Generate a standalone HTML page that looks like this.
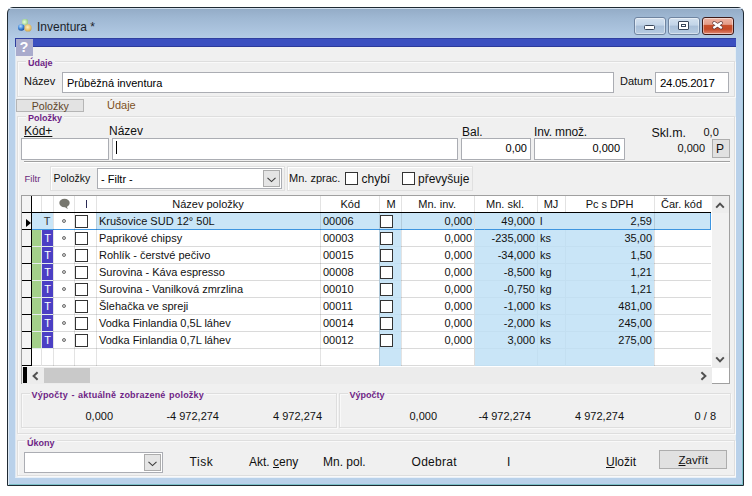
<!DOCTYPE html><html><head><meta charset="utf-8"><style>
html,body{margin:0;padding:0;width:752px;height:496px;overflow:hidden;background:#fff;}
body{position:relative;font-family:"Liberation Sans",sans-serif;}
.a{position:absolute;box-sizing:border-box;}
.t{position:absolute;white-space:nowrap;}
</style></head><body>
<div class="a" style="left:7px;top:7px;width:737px;height:479px;border:1px solid #1f2a33;border-radius:6px 6px 0 0;background:linear-gradient(#93abc6 0px,#9fb8d3 10px,#b3cbe5 30px,#b9d1ea 40px,#b9d1ea 100%);"></div>
<div class="a" style="left:8px;top:8px;width:735px;height:1px;background:#d2dfee;border-radius:5px 5px 0 0;"></div>
<div class="a" style="left:8px;top:60px;width:7px;height:418px;background:#b9d1ea;"></div>
<div class="a" style="left:736px;top:60px;width:7px;height:418px;background:#b9d1ea;"></div>
<div class="a" style="left:8px;top:478px;width:735px;height:7px;background:#b9d1ea;"></div>
<div class="a" style="left:742px;top:40px;width:1px;height:445px;background:linear-gradient(#b9d1ea,#86c6d0 40%,#7cc0c8);"></div>
<div class="a" style="left:8px;top:484px;width:735px;height:1px;background:#7cc0c8;"></div>
<div class="a" style="left:8px;top:40px;width:1px;height:445px;background:#dfeaf5;"></div>
<svg class="a" style="left:14px;top:15px;width:22px;height:20px" viewBox="0 0 22 20">
<defs><radialGradient id="gb" cx="0.4" cy="0.3" r="0.7"><stop offset="0" stop-color="#b8dcff"/><stop offset="0.6" stop-color="#3f86d8"/><stop offset="1" stop-color="#1d4f9a"/></radialGradient>
<radialGradient id="gy" cx="0.45" cy="0.4" r="0.7"><stop offset="0" stop-color="#fff0c0"/><stop offset="0.6" stop-color="#e6c06a"/><stop offset="1" stop-color="#c09a40"/></radialGradient>
<radialGradient id="gg" cx="0.4" cy="0.5" r="0.7"><stop offset="0" stop-color="#e8ffe0"/><stop offset="1" stop-color="#8cc47a"/></radialGradient></defs>
<rect x="8" y="4" width="6" height="6" rx="2" fill="url(#gg)"/>
<circle cx="7.3" cy="12.5" r="3.3" fill="url(#gb)"/><circle cx="14" cy="12.9" r="3.6" fill="url(#gy)"/></svg>
<div class="t" style="left:37px;top:20.84px;font-size:12px;line-height:12px;color:#1b1f2a;">Inventura *</div>
<div class="a" style="left:634px;top:17px;width:32px;height:18px;border:1px solid #6f84a0;border-radius:3px;background:linear-gradient(#d4e1ef 0,#c2d4e8 45%,#a9bfd8 50%,#b8cce2 100%);box-shadow:inset 0 0 0 1px rgba(255,255,255,0.45);"><div class="a" style="left:9px;top:7px;width:11px;height:5px;background:#fff;border:1px solid #39465a;border-radius:1.5px"></div></div>
<div class="a" style="left:668px;top:17px;width:32px;height:18px;border:1px solid #6f84a0;border-radius:3px;background:linear-gradient(#d4e1ef 0,#c2d4e8 45%,#a9bfd8 50%,#b8cce2 100%);box-shadow:inset 0 0 0 1px rgba(255,255,255,0.45);"><div class="a" style="left:9px;top:3px;width:11px;height:9px;background:#fff;border:1px solid #39465a;border-radius:1px"><div class="a" style="left:2px;top:2px;width:5px;height:3px;border:1px solid #39465a;background:#fff"></div></div></div>
<div class="a" style="left:702px;top:17px;width:32px;height:18px;border:1px solid #3c1a18;border-radius:3px;background:linear-gradient(#eeb4a4 0,#e49c88 40%,#c9502c 45%,#c44a28 70%,#d8735a 90%,#e49888 100%);box-shadow:inset 0 0 0 1px rgba(255,255,255,0.45);"><svg class="a" style="left:8px;top:2px;width:14px;height:11px" viewBox="0 0 14 11"><path d="M3.2 3 L10 7.5 M10 3 L3.2 7.5" stroke="#5a3030" stroke-width="3.8" stroke-linecap="round"/><path d="M3.3 3.1 L9.9 7.4 M9.9 3.1 L3.3 7.4" stroke="#fff" stroke-width="2.4" stroke-linecap="square"/></svg></div>
<div class="a" style="left:15px;top:38px;width:721px;height:440px;background:#f0f0f0;border-left:1px solid #dce8f5;border-right:1px solid #e6eef3;border-bottom:1px solid #e8f0f8;"></div>
<div class="a" style="left:15px;top:38px;width:721px;height:9px;background:#3b4fc0;border-top:1px solid #2f3f9f;border-left:1px solid #2f3f9f;border-bottom:1px solid #2c3a9a;"></div>
<div class="a" style="left:16px;top:39px;width:17px;height:17px;background:#a9abcc;"></div>
<div class="t" style="left:19.5px;top:38.5px;font-size:14.5px;line-height:17px;font-weight:bold;color:#fff;">?</div>
<div class="a" style="left:17px;top:61px;width:718px;height:36px;border:1px solid #dedede;box-shadow:inset 1px 1px 0 #f9f9f9, 1px 1px 0 #f9f9f9;"></div>
<div class="t" style="left:26px;top:58.38px;font-size:9px;line-height:11px;font-weight:bold;color:#6e1f86;background:#f0f0f0;padding:0 2px;">Údaje</div>
<div class="t" style="left:24px;top:75.69px;font-size:11px;line-height:11px;color:#111;">Název</div>
<div class="a" style="left:62px;top:72px;width:552px;height:21px;background:#fff;border:1px solid #abadb3;"></div>
<div class="t" style="left:67px;top:77.69px;font-size:11px;line-height:11px;color:#000;">Průběžná inventura</div>
<div class="t" style="left:620px;top:75.69px;font-size:11px;line-height:11px;color:#111;">Datum</div>
<div class="a" style="left:655px;top:72px;width:74px;height:21px;background:#fff;border:1px solid #abadb3;"></div>
<div class="t" style="left:660px;top:78.27px;font-size:11.5px;line-height:11.5px;color:#000;letter-spacing:-0.3px;">24.05.2017</div>
<div class="a" style="left:16px;top:99px;width:68px;height:13px;background:#e3e3e3;border:1px solid #b5b5b5;"></div>
<div class="t" style="left:31.8px;top:100.73px;font-size:10.6px;line-height:10.6px;color:#5e4428;">Položky</div>
<div class="t" style="left:107px;top:100.39px;font-size:11px;line-height:11px;color:#7e5224;">Údaje</div>
<div class="a" style="left:17px;top:116px;width:718px;height:318px;border:1px solid #dedede;box-shadow:inset 1px 1px 0 #f9f9f9, 1px 1px 0 #f9f9f9;"></div>
<div class="t" style="left:26px;top:113.38px;font-size:9px;line-height:11px;font-weight:bold;color:#6e1f86;background:#f0f0f0;padding:0 2px;">Položky</div>
<div class="t" style="left:24px;top:124.84px;font-size:12px;line-height:12px;color:#111;text-decoration:underline;">Kód+</div>
<div class="t" style="left:109px;top:124.84px;font-size:12px;line-height:12px;color:#111;">Název</div>
<div class="t" style="left:462px;top:125.84px;font-size:12px;line-height:12px;color:#111;">Bal.</div>
<div class="t" style="left:534px;top:125.84px;font-size:12px;line-height:12px;color:#111;letter-spacing:-0.15px;">Inv. množ.</div>
<div class="t" style="left:651.5px;top:126.50px;font-size:12.4px;line-height:12.4px;color:#111;">Skl.m.</div>
<div class="t" style="left:703.5px;top:126.69px;font-size:11px;line-height:11px;color:#111;">0,0</div>
<div class="a" style="left:21px;top:138px;width:88px;height:22px;background:#fff;border:1px solid #abadb3;"></div>
<div class="a" style="left:112px;top:138px;width:346px;height:22px;background:#fff;border:1px solid #abadb3;"></div>
<div class="a" style="left:116px;top:141px;width:1px;height:13px;background:#000;"></div>
<div class="a" style="left:461px;top:138px;width:70px;height:22px;background:#fff;border:1px solid #abadb3;"></div>
<div class="t" style="right:225px;top:142.69px;font-size:11px;line-height:11px;color:#000;">0,00</div>
<div class="a" style="left:534px;top:138px;width:91px;height:22px;background:#fff;border:1px solid #abadb3;"></div>
<div class="t" style="right:132px;top:142.69px;font-size:11px;line-height:11px;color:#000;">0,000</div>
<div class="t" style="right:47px;top:142.69px;font-size:11px;line-height:11px;color:#111;">0,000</div>
<div class="a" style="left:712px;top:139px;width:18px;height:19px;background:#e1e1e1;border:1px solid #adadad;"></div>
<div class="t" style="left:716px;top:142.84px;font-size:12px;line-height:12px;color:#111;">P</div>
<div class="a" style="left:24px;top:161px;width:706px;height:1px;background:#a0a0a0;"></div>
<div class="a" style="left:24px;top:162px;width:706px;height:1px;background:#fff;"></div>
<div class="t" style="left:24.5px;top:173.96px;font-size:9.5px;line-height:9.5px;color:#6a2a7a;">Filtr</div>
<div class="a" style="left:50px;top:166px;width:235px;height:25px;border:1px solid #e0e0e0;box-shadow:inset 1px 1px 0 #fff;"></div>
<div class="t" style="left:53.5px;top:173.11px;font-size:10.5px;line-height:10.5px;color:#111;">Položky</div>
<div class="a" style="left:97px;top:168px;width:185px;height:21px;background:#fff;border:1px solid #abadb3;"></div>
<div class="a" style="left:263px;top:170px;width:17px;height:17px;background:#e5e5e5;border:1px solid #acacac;"></div>
<svg class="a" style="left:267px;top:176.5px;width:9px;height:6px" viewBox="0 0 9 6"><path d="M0.5 0.8 L4.5 4.6 L8.5 0.8" fill="none" stroke="#3a3a3a" stroke-width="1.1"/></svg>
<div class="t" style="left:101px;top:173.69px;font-size:11px;line-height:11px;color:#000;">- Filtr -</div>
<div class="a" style="left:287px;top:166px;width:186px;height:25px;border:1px solid #e0e0e0;box-shadow:inset 1px 1px 0 #fff;"></div>
<div class="t" style="left:289px;top:172.69px;font-size:11px;line-height:11px;color:#111;">Mn. zprac.</div>
<div class="a" style="left:345px;top:172px;width:13px;height:13px;background:#fff;border:1px solid #333;"></div>
<div class="t" style="left:361.5px;top:172.84px;font-size:12px;line-height:12px;color:#111;">chybí</div>
<div class="a" style="left:402px;top:172px;width:13px;height:13px;background:#fff;border:1px solid #333;"></div>
<div class="t" style="left:418px;top:172.84px;font-size:12px;line-height:12px;color:#111;">převyšuje</div>
<div class="a" style="left:21px;top:195px;width:709px;height:189px;background:#fff;border:1px solid #a0a0a0;"></div>
<div class="a" style="left:379px;top:213px;width:22px;height:153px;background:#c9e5f7;"></div>
<div class="a" style="left:474px;top:213px;width:180px;height:153px;background:#c9e5f7;"></div>
<div class="a" style="left:32px;top:213px;width:21px;height:16px;background:#c9e5f7;"></div>
<div class="a" style="left:96px;top:213px;width:615px;height:16px;background:#c9e5f7;"></div>
<div class="a" style="left:32px;top:229px;width:679px;height:1px;background:#dadada;"></div>
<div class="a" style="left:32px;top:246px;width:679px;height:1px;background:#dadada;"></div>
<div class="a" style="left:32px;top:263px;width:679px;height:1px;background:#dadada;"></div>
<div class="a" style="left:32px;top:280px;width:679px;height:1px;background:#dadada;"></div>
<div class="a" style="left:32px;top:297px;width:679px;height:1px;background:#dadada;"></div>
<div class="a" style="left:32px;top:314px;width:679px;height:1px;background:#dadada;"></div>
<div class="a" style="left:32px;top:331px;width:679px;height:1px;background:#dadada;"></div>
<div class="a" style="left:32px;top:348px;width:679px;height:1px;background:#dadada;"></div>
<div class="a" style="left:32px;top:365px;width:679px;height:1px;background:#dadada;"></div>
<div class="a" style="left:379px;top:229px;width:22px;height:1px;background:#c3dff1;"></div>
<div class="a" style="left:474px;top:229px;width:180px;height:1px;background:#c3dff1;"></div>
<div class="a" style="left:379px;top:246px;width:22px;height:1px;background:#c3dff1;"></div>
<div class="a" style="left:474px;top:246px;width:180px;height:1px;background:#c3dff1;"></div>
<div class="a" style="left:379px;top:263px;width:22px;height:1px;background:#c3dff1;"></div>
<div class="a" style="left:474px;top:263px;width:180px;height:1px;background:#c3dff1;"></div>
<div class="a" style="left:379px;top:280px;width:22px;height:1px;background:#c3dff1;"></div>
<div class="a" style="left:474px;top:280px;width:180px;height:1px;background:#c3dff1;"></div>
<div class="a" style="left:379px;top:297px;width:22px;height:1px;background:#c3dff1;"></div>
<div class="a" style="left:474px;top:297px;width:180px;height:1px;background:#c3dff1;"></div>
<div class="a" style="left:379px;top:314px;width:22px;height:1px;background:#c3dff1;"></div>
<div class="a" style="left:474px;top:314px;width:180px;height:1px;background:#c3dff1;"></div>
<div class="a" style="left:379px;top:331px;width:22px;height:1px;background:#c3dff1;"></div>
<div class="a" style="left:474px;top:331px;width:180px;height:1px;background:#c3dff1;"></div>
<div class="a" style="left:379px;top:348px;width:22px;height:1px;background:#c3dff1;"></div>
<div class="a" style="left:474px;top:348px;width:180px;height:1px;background:#c3dff1;"></div>
<div class="a" style="left:379px;top:365px;width:22px;height:1px;background:#c3dff1;"></div>
<div class="a" style="left:474px;top:365px;width:180px;height:1px;background:#c3dff1;"></div>
<div class="a" style="left:32px;top:229px;width:679px;height:1px;background:#3d95e0;"></div>
<div class="a" style="left:710px;top:213px;width:1px;height:17px;background:#3d95e0;"></div>
<div class="a" style="left:41px;top:196px;width:1px;height:16px;background:#e2e2e2;"></div>
<div class="a" style="left:41px;top:230px;width:1px;height:136px;background:#e2e2e2;"></div>
<div class="a" style="left:53px;top:196px;width:1px;height:170px;background:rgba(0,0,0,0.11);"></div>
<div class="a" style="left:74px;top:196px;width:1px;height:170px;background:rgba(0,0,0,0.11);"></div>
<div class="a" style="left:96px;top:196px;width:1px;height:170px;background:rgba(0,0,0,0.11);"></div>
<div class="a" style="left:320px;top:196px;width:1px;height:170px;background:rgba(0,0,0,0.11);"></div>
<div class="a" style="left:379px;top:196px;width:1px;height:170px;background:rgba(0,0,0,0.11);"></div>
<div class="a" style="left:401px;top:196px;width:1px;height:170px;background:rgba(0,0,0,0.11);"></div>
<div class="a" style="left:474px;top:196px;width:1px;height:16px;background:#e2e2e2;"></div>
<div class="a" style="left:474px;top:212px;width:1px;height:154px;background:#dcdcdc;"></div>
<div class="a" style="left:537px;top:196px;width:1px;height:16px;background:#e2e2e2;"></div>
<div class="a" style="left:537px;top:230px;width:1px;height:136px;background:#c3dff1;"></div>
<div class="a" style="left:565px;top:196px;width:1px;height:16px;background:#e2e2e2;"></div>
<div class="a" style="left:565px;top:230px;width:1px;height:136px;background:#c3dff1;"></div>
<div class="a" style="left:654px;top:196px;width:1px;height:170px;background:rgba(0,0,0,0.11);"></div>
<div class="a" style="left:22px;top:196px;width:9px;height:170px;background:#f4f4f4;"></div>
<div class="a" style="left:31px;top:196px;width:1px;height:170px;background:#000;"></div>
<div class="a" style="left:22px;top:229px;width:9px;height:1px;background:#000;"></div>
<div class="a" style="left:22px;top:246px;width:9px;height:1px;background:#000;"></div>
<div class="a" style="left:22px;top:263px;width:9px;height:1px;background:#000;"></div>
<div class="a" style="left:22px;top:280px;width:9px;height:1px;background:#000;"></div>
<div class="a" style="left:22px;top:297px;width:9px;height:1px;background:#000;"></div>
<div class="a" style="left:22px;top:314px;width:9px;height:1px;background:#000;"></div>
<div class="a" style="left:22px;top:331px;width:9px;height:1px;background:#000;"></div>
<div class="a" style="left:22px;top:348px;width:9px;height:1px;background:#000;"></div>
<div class="a" style="left:22px;top:365px;width:9px;height:1px;background:#000;"></div>
<div class="a" style="left:22px;top:212px;width:9px;height:1px;background:#000;"></div>
<div class="a" style="left:32px;top:212px;width:679px;height:1px;background:#000;"></div>
<svg class="a" style="left:26px;top:219px;width:5px;height:8px" viewBox="0 0 5 8"><path d="M0 0 L5 4 L0 8 Z" fill="#000"/></svg>
<svg class="a" style="left:58px;top:198px;width:13px;height:12px" viewBox="0 0 13 12"><ellipse cx="6.5" cy="5" rx="5.2" ry="4.2" fill="#77776f"/><path d="M6 8 Q8 10.5 10 11 Q8.5 9 9 7.5 Z" fill="#77776f"/></svg>
<div class="a" style="left:86px;top:200px;width:1.4px;height:8px;background:#2a2a55;"></div>
<div class="t" style="left:108.0px;width:200px;text-align:center;top:199.19px;font-size:11px;line-height:11px;color:#111;">Název položky</div>
<div class="t" style="right:392px;top:199.19px;font-size:11px;line-height:11px;color:#111;">Kód</div>
<div class="t" style="left:291.0px;width:200px;text-align:center;top:199.19px;font-size:11px;line-height:11px;color:#111;">M</div>
<div class="t" style="right:296px;top:199.19px;font-size:11px;line-height:11px;color:#111;">Mn. inv.</div>
<div class="t" style="right:228px;top:199.19px;font-size:11px;line-height:11px;color:#111;">Mn. skl.</div>
<div class="t" style="left:451.0px;width:200px;text-align:center;top:199.19px;font-size:11px;line-height:11px;color:#111;">MJ</div>
<div class="t" style="left:509.5px;width:200px;text-align:center;top:199.19px;font-size:11px;line-height:11px;color:#111;">Pc s DPH</div>
<div class="t" style="right:50px;top:199.19px;font-size:11px;line-height:11px;color:#111;">Čar. kód</div>
<div class="t" style="left:37.0px;width:20px;text-align:center;top:215.69px;font-size:11px;line-height:11px;color:#333;">T</div>
<div class="a" style="left:62px;top:219px;width:4px;height:4px;border:1px solid #6f6f6f;border-radius:50%;background:#d8d8d8;"></div>
<div class="a" style="left:75px;top:215px;width:13px;height:13px;background:#fff;border:1px solid #333;"></div>
<div class="a" style="left:380px;top:215px;width:13px;height:13px;background:#fff;border:1px solid #333;"></div>
<div class="t" style="left:99px;top:215.69px;font-size:11px;line-height:11px;color:#111;">Krušovice SUD 12° 50L</div>
<div class="t" style="left:323px;top:215.69px;font-size:11px;line-height:11px;color:#111;">00006</div>
<div class="t" style="right:280px;top:215.69px;font-size:11px;line-height:11px;color:#111;">0,000</div>
<div class="t" style="right:217px;top:215.69px;font-size:11px;line-height:11px;color:#111;">49,000</div>
<div class="t" style="left:540px;top:215.69px;font-size:11px;line-height:11px;color:#111;">l</div>
<div class="t" style="right:100px;top:215.69px;font-size:11px;line-height:11px;color:#111;">2,59</div>
<div class="a" style="left:32px;top:230px;width:9px;height:16px;background:#a3d08a;"></div>
<div class="a" style="left:42px;top:230px;width:11px;height:16px;background:#4b3fc4;"></div>
<div class="a" style="left:32px;top:246px;width:21px;height:1px;background:#e4ecec;"></div>
<div class="t" style="left:37.5px;width:20px;text-align:center;top:232.69px;font-size:11px;line-height:11px;color:#fff;">T</div>
<div class="a" style="left:62px;top:236px;width:4px;height:4px;border:1px solid #6f6f6f;border-radius:50%;background:#d8d8d8;"></div>
<div class="a" style="left:75px;top:232px;width:13px;height:13px;background:#fff;border:1px solid #333;"></div>
<div class="a" style="left:380px;top:232px;width:13px;height:13px;background:#fff;border:1px solid #333;"></div>
<div class="t" style="left:99px;top:232.69px;font-size:11px;line-height:11px;color:#111;">Paprikové chipsy</div>
<div class="t" style="left:323px;top:232.69px;font-size:11px;line-height:11px;color:#111;">00003</div>
<div class="t" style="right:280px;top:232.69px;font-size:11px;line-height:11px;color:#111;">0,000</div>
<div class="t" style="right:217px;top:232.69px;font-size:11px;line-height:11px;color:#111;">-235,000</div>
<div class="t" style="left:540px;top:232.69px;font-size:11px;line-height:11px;color:#111;">ks</div>
<div class="t" style="right:100px;top:232.69px;font-size:11px;line-height:11px;color:#111;">35,00</div>
<div class="a" style="left:32px;top:247px;width:9px;height:16px;background:#a3d08a;"></div>
<div class="a" style="left:42px;top:247px;width:11px;height:16px;background:#4b3fc4;"></div>
<div class="a" style="left:32px;top:263px;width:21px;height:1px;background:#e4ecec;"></div>
<div class="t" style="left:37.5px;width:20px;text-align:center;top:249.69px;font-size:11px;line-height:11px;color:#fff;">T</div>
<div class="a" style="left:62px;top:253px;width:4px;height:4px;border:1px solid #6f6f6f;border-radius:50%;background:#d8d8d8;"></div>
<div class="a" style="left:75px;top:249px;width:13px;height:13px;background:#fff;border:1px solid #333;"></div>
<div class="a" style="left:380px;top:249px;width:13px;height:13px;background:#fff;border:1px solid #333;"></div>
<div class="t" style="left:99px;top:249.69px;font-size:11px;line-height:11px;color:#111;">Rohlík - čerstvé pečivo</div>
<div class="t" style="left:323px;top:249.69px;font-size:11px;line-height:11px;color:#111;">00015</div>
<div class="t" style="right:280px;top:249.69px;font-size:11px;line-height:11px;color:#111;">0,000</div>
<div class="t" style="right:217px;top:249.69px;font-size:11px;line-height:11px;color:#111;">-34,000</div>
<div class="t" style="left:540px;top:249.69px;font-size:11px;line-height:11px;color:#111;">ks</div>
<div class="t" style="right:100px;top:249.69px;font-size:11px;line-height:11px;color:#111;">1,50</div>
<div class="a" style="left:32px;top:264px;width:9px;height:16px;background:#a3d08a;"></div>
<div class="a" style="left:42px;top:264px;width:11px;height:16px;background:#4b3fc4;"></div>
<div class="a" style="left:32px;top:280px;width:21px;height:1px;background:#e4ecec;"></div>
<div class="t" style="left:37.5px;width:20px;text-align:center;top:266.69px;font-size:11px;line-height:11px;color:#fff;">T</div>
<div class="a" style="left:62px;top:270px;width:4px;height:4px;border:1px solid #6f6f6f;border-radius:50%;background:#d8d8d8;"></div>
<div class="a" style="left:75px;top:266px;width:13px;height:13px;background:#fff;border:1px solid #333;"></div>
<div class="a" style="left:380px;top:266px;width:13px;height:13px;background:#fff;border:1px solid #333;"></div>
<div class="t" style="left:99px;top:266.69px;font-size:11px;line-height:11px;color:#111;">Surovina - Káva espresso</div>
<div class="t" style="left:323px;top:266.69px;font-size:11px;line-height:11px;color:#111;">00008</div>
<div class="t" style="right:280px;top:266.69px;font-size:11px;line-height:11px;color:#111;">0,000</div>
<div class="t" style="right:217px;top:266.69px;font-size:11px;line-height:11px;color:#111;">-8,500</div>
<div class="t" style="left:540px;top:266.69px;font-size:11px;line-height:11px;color:#111;">kg</div>
<div class="t" style="right:100px;top:266.69px;font-size:11px;line-height:11px;color:#111;">1,21</div>
<div class="a" style="left:32px;top:281px;width:9px;height:16px;background:#a3d08a;"></div>
<div class="a" style="left:42px;top:281px;width:11px;height:16px;background:#4b3fc4;"></div>
<div class="a" style="left:32px;top:297px;width:21px;height:1px;background:#e4ecec;"></div>
<div class="t" style="left:37.5px;width:20px;text-align:center;top:283.69px;font-size:11px;line-height:11px;color:#fff;">T</div>
<div class="a" style="left:62px;top:287px;width:4px;height:4px;border:1px solid #6f6f6f;border-radius:50%;background:#d8d8d8;"></div>
<div class="a" style="left:75px;top:283px;width:13px;height:13px;background:#fff;border:1px solid #333;"></div>
<div class="a" style="left:380px;top:283px;width:13px;height:13px;background:#fff;border:1px solid #333;"></div>
<div class="t" style="left:99px;top:283.69px;font-size:11px;line-height:11px;color:#111;">Surovina - Vanilková zmrzlina</div>
<div class="t" style="left:323px;top:283.69px;font-size:11px;line-height:11px;color:#111;">00010</div>
<div class="t" style="right:280px;top:283.69px;font-size:11px;line-height:11px;color:#111;">0,000</div>
<div class="t" style="right:217px;top:283.69px;font-size:11px;line-height:11px;color:#111;">-0,750</div>
<div class="t" style="left:540px;top:283.69px;font-size:11px;line-height:11px;color:#111;">kg</div>
<div class="t" style="right:100px;top:283.69px;font-size:11px;line-height:11px;color:#111;">1,21</div>
<div class="a" style="left:32px;top:298px;width:9px;height:16px;background:#a3d08a;"></div>
<div class="a" style="left:42px;top:298px;width:11px;height:16px;background:#4b3fc4;"></div>
<div class="a" style="left:32px;top:314px;width:21px;height:1px;background:#e4ecec;"></div>
<div class="t" style="left:37.5px;width:20px;text-align:center;top:300.69px;font-size:11px;line-height:11px;color:#fff;">T</div>
<div class="a" style="left:62px;top:304px;width:4px;height:4px;border:1px solid #6f6f6f;border-radius:50%;background:#d8d8d8;"></div>
<div class="a" style="left:75px;top:300px;width:13px;height:13px;background:#fff;border:1px solid #333;"></div>
<div class="a" style="left:380px;top:300px;width:13px;height:13px;background:#fff;border:1px solid #333;"></div>
<div class="t" style="left:99px;top:300.69px;font-size:11px;line-height:11px;color:#111;">Šlehačka ve spreji</div>
<div class="t" style="left:323px;top:300.69px;font-size:11px;line-height:11px;color:#111;">00011</div>
<div class="t" style="right:280px;top:300.69px;font-size:11px;line-height:11px;color:#111;">0,000</div>
<div class="t" style="right:217px;top:300.69px;font-size:11px;line-height:11px;color:#111;">-1,000</div>
<div class="t" style="left:540px;top:300.69px;font-size:11px;line-height:11px;color:#111;">ks</div>
<div class="t" style="right:100px;top:300.69px;font-size:11px;line-height:11px;color:#111;">481,00</div>
<div class="a" style="left:32px;top:315px;width:9px;height:16px;background:#a3d08a;"></div>
<div class="a" style="left:42px;top:315px;width:11px;height:16px;background:#4b3fc4;"></div>
<div class="a" style="left:32px;top:331px;width:21px;height:1px;background:#e4ecec;"></div>
<div class="t" style="left:37.5px;width:20px;text-align:center;top:317.69px;font-size:11px;line-height:11px;color:#fff;">T</div>
<div class="a" style="left:62px;top:321px;width:4px;height:4px;border:1px solid #6f6f6f;border-radius:50%;background:#d8d8d8;"></div>
<div class="a" style="left:75px;top:317px;width:13px;height:13px;background:#fff;border:1px solid #333;"></div>
<div class="a" style="left:380px;top:317px;width:13px;height:13px;background:#fff;border:1px solid #333;"></div>
<div class="t" style="left:99px;top:317.69px;font-size:11px;line-height:11px;color:#111;">Vodka Finlandia 0,5L láhev</div>
<div class="t" style="left:323px;top:317.69px;font-size:11px;line-height:11px;color:#111;">00014</div>
<div class="t" style="right:280px;top:317.69px;font-size:11px;line-height:11px;color:#111;">0,000</div>
<div class="t" style="right:217px;top:317.69px;font-size:11px;line-height:11px;color:#111;">-2,000</div>
<div class="t" style="left:540px;top:317.69px;font-size:11px;line-height:11px;color:#111;">ks</div>
<div class="t" style="right:100px;top:317.69px;font-size:11px;line-height:11px;color:#111;">245,00</div>
<div class="a" style="left:32px;top:332px;width:9px;height:16px;background:#a3d08a;"></div>
<div class="a" style="left:42px;top:332px;width:11px;height:16px;background:#4b3fc4;"></div>
<div class="a" style="left:32px;top:348px;width:21px;height:1px;background:#e4ecec;"></div>
<div class="t" style="left:37.5px;width:20px;text-align:center;top:334.69px;font-size:11px;line-height:11px;color:#fff;">T</div>
<div class="a" style="left:62px;top:338px;width:4px;height:4px;border:1px solid #6f6f6f;border-radius:50%;background:#d8d8d8;"></div>
<div class="a" style="left:75px;top:334px;width:13px;height:13px;background:#fff;border:1px solid #333;"></div>
<div class="a" style="left:380px;top:334px;width:13px;height:13px;background:#fff;border:1px solid #333;"></div>
<div class="t" style="left:99px;top:334.69px;font-size:11px;line-height:11px;color:#111;">Vodka Finlandia 0,7L láhev</div>
<div class="t" style="left:323px;top:334.69px;font-size:11px;line-height:11px;color:#111;">00012</div>
<div class="t" style="right:280px;top:334.69px;font-size:11px;line-height:11px;color:#111;">0,000</div>
<div class="t" style="right:217px;top:334.69px;font-size:11px;line-height:11px;color:#111;">3,000</div>
<div class="t" style="left:540px;top:334.69px;font-size:11px;line-height:11px;color:#111;">ks</div>
<div class="t" style="right:100px;top:334.69px;font-size:11px;line-height:11px;color:#111;">275,00</div>
<div class="a" style="left:712px;top:196px;width:17px;height:172px;background:#ededed;"></div>
<div class="a" style="left:712px;top:213px;width:17px;height:140px;background:#f1f1f1;"></div>
<svg class="a" style="left:715px;top:201px;width:10px;height:8px" viewBox="0 0 10 8"><path d="M1.2 6.6 L5 2.6 L8.8 6.6" fill="none" stroke="#505050" stroke-width="2"/></svg>
<svg class="a" style="left:715px;top:356px;width:10px;height:8px" viewBox="0 0 10 8"><path d="M1.2 1.4 L5 5.4 L8.8 1.4" fill="none" stroke="#505050" stroke-width="2"/></svg>
<div class="a" style="left:22px;top:367px;width:690px;height:17px;background:#ececec;"></div>
<div class="a" style="left:23px;top:367px;width:4px;height:16px;background:#000;"></div>
<svg class="a" style="left:31px;top:371px;width:8px;height:10px" viewBox="0 0 8 10"><path d="M6.6 1.2 L2.6 5 L6.6 8.8" fill="none" stroke="#505050" stroke-width="2"/></svg>
<div class="a" style="left:44px;top:368px;width:46px;height:15px;background:#c9c9c9;"></div>
<svg class="a" style="left:700px;top:371px;width:8px;height:10px" viewBox="0 0 8 10"><path d="M1.4 1.2 L5.4 5 L1.4 8.8" fill="none" stroke="#505050" stroke-width="2"/></svg>
<div class="a" style="left:21px;top:393px;width:316px;height:35px;border:1px solid #dedede;box-shadow:inset 1px 1px 0 #f9f9f9, 1px 1px 0 #f9f9f9;"></div>
<div class="t" style="left:29.5px;top:390.38px;font-size:9px;line-height:11px;font-weight:bold;color:#6e1f86;background:#f0f0f0;padding:0 2px;letter-spacing:0.2px;word-spacing:0.8px;">Výpočty - aktuálně zobrazené položky</div>
<div class="t" style="right:639px;top:410.69px;font-size:11px;line-height:11px;color:#111;">0,000</div>
<div class="t" style="right:533px;top:410.69px;font-size:11px;line-height:11px;color:#111;">-4 972,274</div>
<div class="t" style="right:430px;top:410.69px;font-size:11px;line-height:11px;color:#111;">4 972,274</div>
<div class="a" style="left:339px;top:393px;width:392px;height:35px;border:1px solid #dedede;box-shadow:inset 1px 1px 0 #f9f9f9, 1px 1px 0 #f9f9f9;"></div>
<div class="t" style="left:347.5px;top:390.38px;font-size:9px;line-height:11px;font-weight:bold;color:#6e1f86;background:#f0f0f0;padding:0 2px;">Výpočty</div>
<div class="t" style="right:315px;top:410.69px;font-size:11px;line-height:11px;color:#111;">0,000</div>
<div class="t" style="right:221px;top:410.69px;font-size:11px;line-height:11px;color:#111;">-4 972,274</div>
<div class="t" style="right:128px;top:410.69px;font-size:11px;line-height:11px;color:#111;">4 972,274</div>
<div class="t" style="right:36px;top:410.69px;font-size:11px;line-height:11px;color:#111;">0 / 8</div>
<div class="a" style="left:17px;top:440px;width:718px;height:36px;border:1px solid #dedede;box-shadow:inset 1px 1px 0 #f9f9f9, 1px 1px 0 #f9f9f9;"></div>
<div class="t" style="left:25px;top:438.38px;font-size:9px;line-height:11px;font-weight:bold;color:#6e1f86;background:#f0f0f0;padding:0 2px;">Úkony</div>
<div class="a" style="left:24px;top:452px;width:139px;height:21px;background:#fff;border:1px solid #abadb3;"></div>
<div class="a" style="left:144px;top:454px;width:17px;height:17px;background:#e5e5e5;border:1px solid #acacac;"></div>
<svg class="a" style="left:148px;top:460.5px;width:9px;height:6px" viewBox="0 0 9 6"><path d="M0.5 0.8 L4.5 4.6 L8.5 0.8" fill="none" stroke="#3a3a3a" stroke-width="1.1"/></svg>
<div class="t" style="left:189.5px;top:455.84px;font-size:12px;line-height:12px;color:#111;letter-spacing:0.6px;">Tisk</div>
<div class="t" style="left:249px;top:455.84px;font-size:12px;line-height:12px;color:#111;">Akt. <u>c</u>eny</div>
<div class="t" style="left:323px;top:455.84px;font-size:12px;line-height:12px;color:#111;">Mn. pol.</div>
<div class="t" style="left:411.5px;top:455.84px;font-size:12px;line-height:12px;color:#111;letter-spacing:0.3px;">Odebrat</div>
<div class="t" style="left:507px;top:455.84px;font-size:12px;line-height:12px;color:#111;">I</div>
<div class="t" style="left:606px;top:455.84px;font-size:12px;line-height:12px;color:#111;"><u>U</u>ložit</div>
<div class="a" style="left:659px;top:450px;width:68px;height:19px;background:#e1e1e1;border:1px solid #adadad;"></div>
<div class="t" style="left:678.5px;top:454.77px;font-size:11.5px;line-height:11.5px;color:#111;"><u>Z</u>avřít</div>
</body></html>
